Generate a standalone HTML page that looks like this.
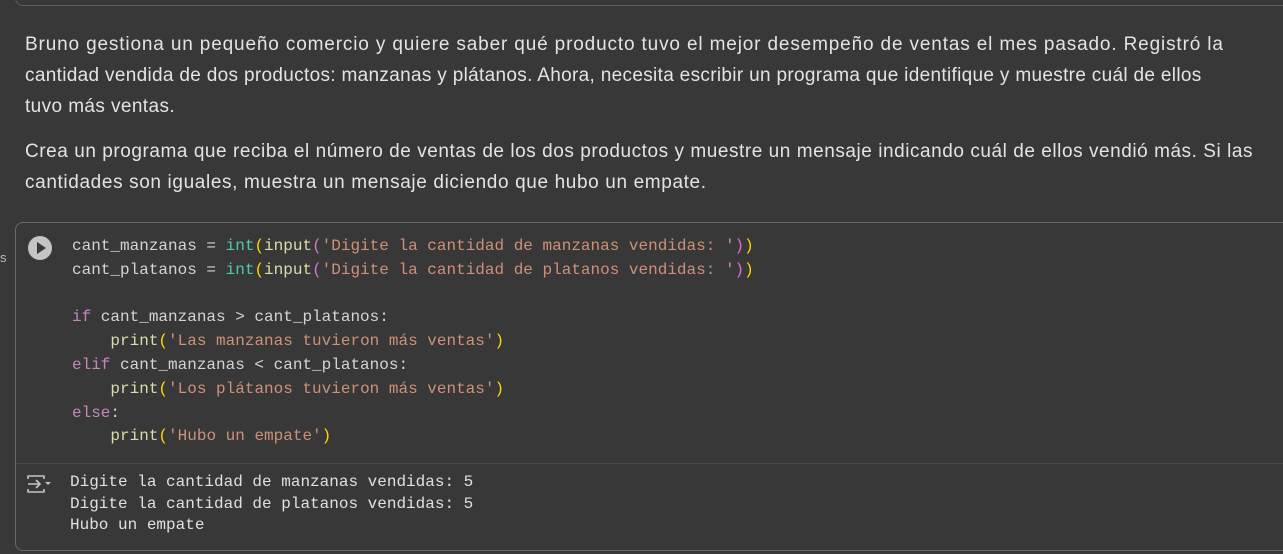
<!DOCTYPE html>
<html><head><meta charset="utf-8"><style>
html,body{margin:0;padding:0;background:#383838;width:1283px;height:554px;overflow:hidden;position:relative}
.top{position:absolute;left:15px;top:-20px;width:1300px;height:24px;border:1px solid #5f5f5f;border-radius:8px}
.md{position:absolute;left:25px;width:1260px;font-family:"Liberation Sans",sans-serif;font-size:19px;letter-spacing:0.85px;line-height:31px;color:#e3e3e3;white-space:nowrap}
.cell{position:absolute;left:15px;top:222px;width:1300px;height:327px;border:1px solid #6a6a6a;border-radius:8px}
.sep{position:absolute;left:16px;top:463px;width:1280px;height:1px;background:#4a4a4a}
pre{margin:0;position:absolute;font-family:"Liberation Mono",monospace;font-size:16px;color:#d4d4d4}
.code{left:72px;top:235px;line-height:23.8px}
.out{left:70px;top:472px;line-height:21.5px;color:#e0e0e0}
.k{color:#c586c0}.b{color:#4ec9b0}.s{color:#ce9178}.y{color:#ffd700}.f{color:#dcdcaa}.p{color:#da70d6}
.run{position:absolute;left:28px;top:236px;width:24px;height:24px;border-radius:50%;background:#c4c4c4}
.run:after{content:"";position:absolute;left:9px;top:6px;border-left:9px solid #383838;border-top:6px solid transparent;border-bottom:6px solid transparent}
.s0{position:absolute;left:0;top:250px;font:13px "Liberation Sans",sans-serif;color:#bbb}
</style></head><body>
<div class="top"></div>
<div class="md" style="top:29px">Bruno gestiona un pequeño comercio y quiere saber qué producto tuvo el mejor desempeño de ventas el mes pasado. Registró la<br><span style="letter-spacing:0.32px">cantidad vendida de dos productos: manzanas y plátanos. Ahora, necesita escribir un programa que identifique y muestre cuál de ellos</span><br><span style="letter-spacing:0.4px">tuvo más ventas.</span></div>
<div class="md" style="top:136px"><span style="letter-spacing:0.55px">Crea un programa que reciba el número de ventas de los dos productos y muestre un mensaje indicando cuál de ellos vendió más. Si las</span><br><span style="letter-spacing:0.63px">cantidades son iguales, muestra un mensaje diciendo que hubo un empate.</span></div>
<div class="cell"></div>
<div class="sep"></div>
<div class="s0">s</div>
<div class="run"></div>
<pre class="code">cant_manzanas = <span class="b">int</span><span class="y">(</span><span class="f">input</span><span class="p">(</span><span class="s">'Digite la cantidad de manzanas vendidas: '</span><span class="p">)</span><span class="y">)</span>
cant_platanos = <span class="b">int</span><span class="y">(</span><span class="f">input</span><span class="p">(</span><span class="s">'Digite la cantidad de platanos vendidas: '</span><span class="p">)</span><span class="y">)</span>

<span class="k">if</span> cant_manzanas &gt; cant_platanos:
    <span class="f">print</span><span class="y">(</span><span class="s">'Las manzanas tuvieron más ventas'</span><span class="y">)</span>
<span class="k">elif</span> cant_manzanas &lt; cant_platanos:
    <span class="f">print</span><span class="y">(</span><span class="s">'Los plátanos tuvieron más ventas'</span><span class="y">)</span>
<span class="k">else</span>:
    <span class="f">print</span><span class="y">(</span><span class="s">'Hubo un empate'</span><span class="y">)</span></pre>
<svg style="position:absolute;left:26px;top:474px" width="26" height="20" viewBox="0 0 26 20" fill="none" stroke="#c4c4c4" stroke-width="1.6">
<path d="M2 5V2h16v3M2 15v3h16v-3M2 10h12M10 6l4 4-4 4"/><path d="M19 8h6l-3 3z" fill="#c4c4c4" stroke="none"/></svg>
<pre class="out">Digite la cantidad de manzanas vendidas: 5
Digite la cantidad de platanos vendidas: 5
Hubo un empate</pre>
</body></html>
